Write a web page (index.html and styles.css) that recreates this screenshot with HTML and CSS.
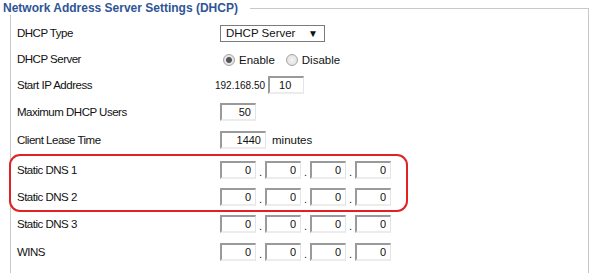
FILE: index.html
```html
<!DOCTYPE html>
<html lang="en">
<head>
  <meta charset="UTF-8" />
  <title>DHCP Settings</title>
  <link rel="stylesheet" href="styles.css">
</head>
<body>

  <div class="panel">
    <div class="head">
      <span class="title">Network Address Server Settings (DHCP)</span>
      <span class="line"></span>
    </div>

    <div class="box">
      <div class="row">
        <span class="label">DHCP Type</span>
        <div class="field">
          <div class="select"><span>DHCP Server</span><span class="arrow">▼</span></div>
        </div>
      </div>

      <div class="row">
        <span class="label">DHCP Server</span>
        <div class="field">
          <span class="radio on"></span><span class="opt">Enable</span>
          <span class="radio"></span><span class="opt">Disable</span>
        </div>
      </div>

      <div class="row">
        <span class="label">Start IP Address</span>
        <div class="field">
          <span class="prefix">192.168.50</span>
          <input class="inp short left" type="text" value="10">
        </div>
      </div>

      <div class="row tall">
        <span class="label">Maximum DHCP Users</span>
        <div class="field"><input class="inp short" type="text" value="50"></div>
      </div>

      <div class="row tall">
        <span class="label">Client Lease Time</span>
        <div class="field">
          <input class="inp wide" type="text" value="1440">
          <span class="unit">minutes</span>
        </div>
      </div>

      <!-- highlighted rows -->
      <div class="mark">
        <div class="row">
          <span class="label">Static DNS 1</span>
          <div class="field ip">
            <input class="inp short" type="text" value="0"><span class="dot">.</span>
            <input class="inp short" type="text" value="0"><span class="dot">.</span>
            <input class="inp short" type="text" value="0"><span class="dot">.</span>
            <input class="inp short" type="text" value="0">
          </div>
        </div>
        <div class="row">
          <span class="label">Static DNS 2</span>
          <div class="field ip">
            <input class="inp short" type="text" value="0"><span class="dot">.</span>
            <input class="inp short" type="text" value="0"><span class="dot">.</span>
            <input class="inp short" type="text" value="0"><span class="dot">.</span>
            <input class="inp short" type="text" value="0">
          </div>
        </div>
      </div>

      <div class="row tall">
        <span class="label">Static DNS 3</span>
        <div class="field ip">
          <input class="inp short" type="text" value="0"><span class="dot">.</span>
          <input class="inp short" type="text" value="0"><span class="dot">.</span>
          <input class="inp short" type="text" value="0"><span class="dot">.</span>
          <input class="inp short" type="text" value="0">
        </div>
      </div>

      <div class="row tall">
        <span class="label">WINS</span>
        <div class="field ip">
          <input class="inp short" type="text" value="0"><span class="dot">.</span>
          <input class="inp short" type="text" value="0"><span class="dot">.</span>
          <input class="inp short" type="text" value="0"><span class="dot">.</span>
          <input class="inp short" type="text" value="0">
        </div>
      </div>
    </div>
  </div>

</body>
</html>
```

FILE: styles.css
```css
* { box-sizing: border-box; margin: 0; padding: 0; }
body {
  font-family: "Liberation Sans", Arial, sans-serif;
  font-size: 11px; color: #111; background: #fff;
}

.panel { width: 589px; }

.head {
  display: flex; align-items: center; height: 15px;
}
.title {
  padding-left: 3px;
  font-size: 12px; font-weight: bold; color: #2f5597;
  white-space: nowrap;
}
.line {
  flex: 1; height: 7px; margin-left: 12px; margin-top: 8px;
  border-top: 1px solid #c8c8c8; border-right: 1px solid #c8c8c8;
}

.box {
  margin-left: 10px; padding-top: 5px; height: 258px;
  border-left: 1px solid #c8c8c8; border-right: 1px solid #c8c8c8;
}

.row {
  display: flex; align-items: center; height: 26px;
  padding-left: 6px;
}
.row.tall { height: 28px; }

.label { width: 203px; flex: none; font-size: 11.5px; letter-spacing: -0.5px; }

.field { display: flex; align-items: center; }

.select {
  display: flex; justify-content: space-between; align-items: center;
  width: 105px; height: 17px; padding: 0 6px 0 5px;
  border: 1px solid #7a7a7a; background: #fff; font-size: 11.5px;
}
.arrow { font-size: 10px; color: #111; }

.radio {
  width: 12px; height: 12px; border-radius: 50%; margin: 2px 4px 0 3px;
  border: 1px solid #a5a5a5;
  background: radial-gradient(circle, #f4f4f4 0, #dcdcdc 100%);
}
.radio.on { background: radial-gradient(circle, #555 0, #555 2.5px, #e8e8e8 3.5px, #d8d8d8 100%); }
.opt { margin: 2px 8px 0 0; font-size: 11.5px; }

.prefix { margin-left: -5px; margin-right: 3px; font-size: 10px; }

.inp {
  height: 18px; padding-right: 4px; text-align: right;
  font-family: "Liberation Sans", Arial, sans-serif; font-size: 11px; color: #111;
  background: #fff;
  border-style: solid; border-width: 2px 1px 2px 2px;
  border-color: #9a9a9a #e4e4e4 #ececec #9a9a9a;
  outline: none;
}
.inp.short { width: 36px; }
.inp.wide { width: 46px; }
.inp.left { text-align: left; padding-left: 9px; }

.unit { margin-left: 6px; font-size: 11.5px; }

.dot { width: 9px; text-align: center; color: #223; padding-top: 4px; }

.mark {
  height: 58px; margin: 0 0 -2px -2px; width: 399px;
  border: 2px solid #e02224; border-radius: 11px;
}
.mark .row { height: 27px; }
```
